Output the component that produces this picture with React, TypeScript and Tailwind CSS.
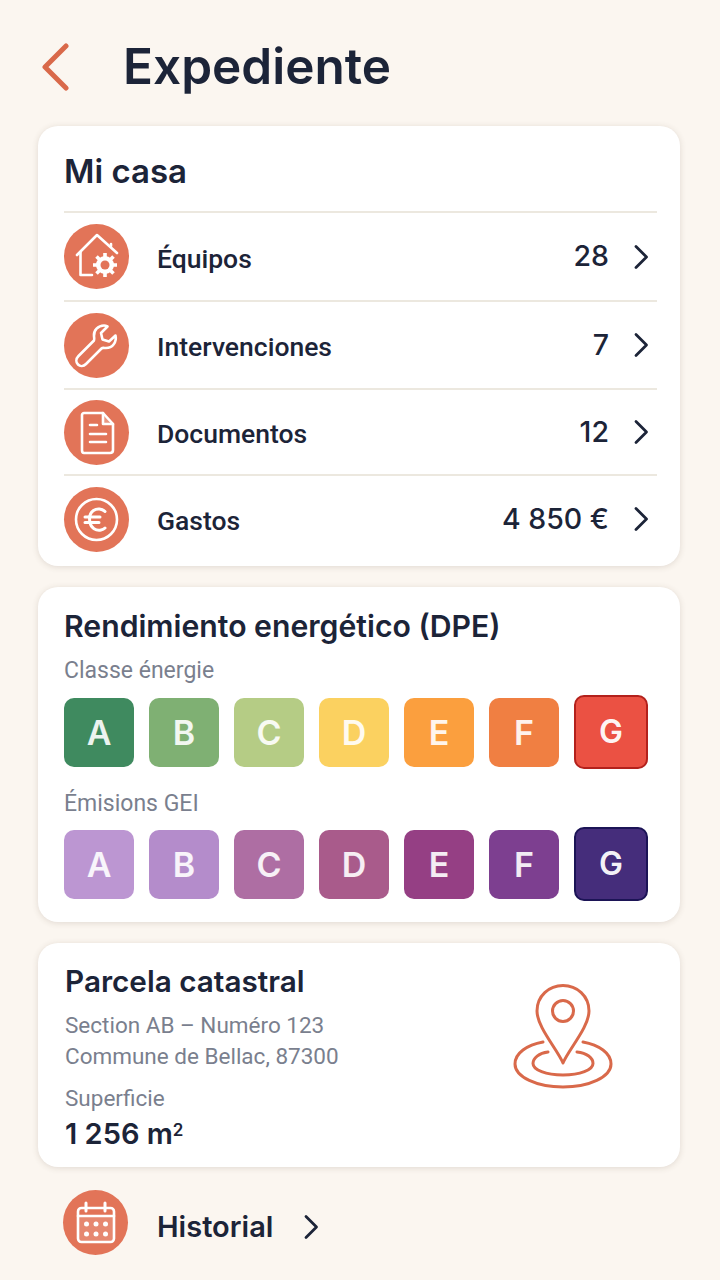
import type { ReactNode } from 'react';

const inter = { fontFamily: 'Inter, sans-serif' };
const roboto = { fontFamily: 'Roboto, sans-serif' };

const iconProps = {
  viewBox: '0 0 65 65',
  className: 'h-[65px] w-[65px]',
  fill: 'none',
  stroke: 'white',
  strokeWidth: 2.6,
  strokeLinecap: 'round' as const,
  strokeLinejoin: 'round' as const,
};

const HouseGear = () => (
  <svg {...iconProps}>
    <path d="M13 31 L33 11 L53 29" />
    <path d="M16.5 28 V51 H28" />
    <path d="M47 22 V20" />
    <g stroke="white" strokeWidth="3.6" strokeLinecap="butt">
      <path d="M41 29 V53 M29 41 H53 M32.5 32.5 L49.5 49.5 M32.5 49.5 L49.5 32.5" />
    </g>
    <circle cx="41" cy="41" r="9" fill="white" stroke="none" />
    <circle cx="41" cy="41" r="4.5" fill="#e27458" stroke="none" />
  </svg>
);

const Wrench = () => (
  <svg {...iconProps}>
    <path d="M40 12.5 C34 12.5 29.5 17.5 30 23 C30.2 25 30.5 26.5 30 27.5 L14.5 43 C11.5 46 12 49.5 14 51.5 C16 53.5 19.5 53.5 22 51 L37.5 35.5 C38.5 34.5 40 35 42 35 C48.5 35 53 29 51.5 22.5 L45 28.5 L38.5 26.5 L37 20 L43.5 13.5 C42.5 13 41.2 12.5 40 12.5 Z" />
  </svg>
);

const DocIcon = () => (
  <svg {...iconProps}>
    <path d="M20 13 H39 L49 24 V50 C49 52 48 53 46 53 H20 C19 53 18 52 18 50 V15 C18 14 19 13 20 13 Z" />
    <path d="M39 13 V24 H49" fill="white" fillOpacity="0.25" />
    <path d="M26 25 H33 M26 34 H42 M26 42 H42" />
  </svg>
);

const EuroIcon = () => (
  <svg {...iconProps}>
    <circle cx="32.5" cy="32.5" r="20.5" />
    <path d="M41 24.5 C38 21.5 33 21 29.5 23.5 C26 26 25 31 26 35.5 C27 41 32 44 37 43 C38.5 42.7 40 42 41 41" strokeWidth="3" />
    <path d="M21 30 H36 M21 35.5 H35" strokeWidth="3" />
  </svg>
);

const CalendarIcon = () => (
  <svg {...iconProps}>
    <rect x="15" y="18" width="36" height="34" rx="3.5" />
    <path d="M16 26 H50 V48 A3 3 0 0 1 47 51 H19 A3 3 0 0 1 16 48 Z" fill="white" fillOpacity="0.15" stroke="none" />
    <path d="M15 26 H51" />
    <path d="M23 13 V21 M42 13 V21" strokeWidth="3" />
    <g fill="white" stroke="none">
      <circle cx="23.5" cy="34" r="2.5" />
      <circle cx="33" cy="34" r="2.5" />
      <circle cx="42.5" cy="34" r="2.5" />
      <circle cx="23.5" cy="44" r="2.5" />
      <circle cx="33" cy="44" r="2.5" />
      <circle cx="42.5" cy="44" r="2.5" />
    </g>
  </svg>
);

const PinIcon = () => (
  <svg viewBox="0 0 100 105" className="h-[105px] w-[100px]" fill="none" stroke="#d9694a" strokeWidth="3" strokeLinecap="round" strokeLinejoin="round">
    <path d="M50 79 C44 65 24 43 24 27 C24 12 36 1.5 50 1.5 C64 1.5 76 12 76 27 C76 43 56 65 50 79 Z" />
    <circle cx="50" cy="27" r="10.5" />
    <path d="M30 58 C14 61 2 69 2 80 C2 93 24 103 50 103 C76 103 98 93 98 80 C98 69 86 61 70 58" />
    <path d="M35 68 C26 69 20 74 20 79.5 C20 86 33 91 50 91 C67 91 80 86 80 79.5 C80 74 74 69 64 68" />
  </svg>
);

function Chevron({ className }: { className: string }) {
  return (
    <svg viewBox="0 0 16 26" className={className} fill="none" stroke="#1c2438" strokeWidth="2.8" strokeLinecap="round" strokeLinejoin="round">
      <path d="M3 2.5 L13.5 13 L3 23.5" />
    </svg>
  );
}

function CircleIcon({ children }: { children: ReactNode }) {
  return <div className="flex h-[65px] w-[65px] shrink-0 items-center justify-center rounded-full bg-[#e27458]">{children}</div>;
}

const rows = [
  { label: 'Équipos', value: '28', icon: <HouseGear />, h: 'h-[89px]' },
  { label: 'Intervenciones', value: '7', icon: <Wrench />, h: 'h-[88px]' },
  { label: 'Documentos', value: '12', icon: <DocIcon />, h: 'h-[86px]' },
  { label: 'Gastos', value: '4 850 €', icon: <EuroIcon />, h: 'h-[88px]' },
];

const energy = ['bg-[#3f8a5f]', 'bg-[#7fb073]', 'bg-[#b5cc85]', 'bg-[#fbd160]', 'bg-[#fb9f3e]', 'bg-[#f07f42]'];
const ges = ['bg-[#bc96d2]', 'bg-[#b48ccb]', 'bg-[#ae6ea3]', 'bg-[#a95b8b]', 'bg-[#953f84]', 'bg-[#7d3f90]'];
const letters = ['A', 'B', 'C', 'D', 'E', 'F'];

function Scale({ colors, last, top }: { colors: string[]; last: string; top: string }) {
  return (
    <div className={`flex items-center gap-[15px] ${top}`}>
      {colors.map((c, i) => (
        <div key={letters[i]} className={`flex h-[69px] w-[70px] items-center justify-center rounded-[10px] text-[34px] font-semibold text-white/90 ${c}`}>
          {letters[i]}
        </div>
      ))}
      <div className={`flex h-[74px] w-[74px] items-center justify-center rounded-[10px] border-2 text-[32px] font-semibold text-white/95 ${last}`}>G</div>
    </div>
  );
}

export default function App() {
  return (
    <div style={inter} className="h-[1280px] w-[720px] overflow-hidden bg-[#fbf6f0] text-[#1c2438]">
      <header className="flex h-[126px] items-center pt-[7px] pl-[40px]">
        <svg viewBox="0 0 30 48" className="h-[48px] w-[30px]" fill="none" stroke="#d9694a" strokeWidth="5" strokeLinecap="round" strokeLinejoin="round">
          <path d="M26 3 L5 24 L26 45" />
        </svg>
        <h1 className="ml-[53px] text-[49.5px] font-semibold leading-none">Expediente</h1>
      </header>

      <section className="ml-[38px] h-[440px] w-[642px] rounded-[20px] bg-white pl-[26px] pr-[23px] shadow-[0_1px_6px_rgba(90,70,50,0.16)]">
        <h2 className="flex h-[85px] items-center pt-[6px] text-[33px] font-semibold">Mi casa</h2>
        {rows.map((r) => (
          <div key={r.label} className={`flex items-center border-t-2 border-[#ece8df] ${r.h}`}>
            <CircleIcon>{r.icon}</CircleIcon>
            <span style={roboto} className="ml-[28px] pt-[4px] text-[26.5px] font-medium">{r.label}</span>
            <span className="ml-auto text-[28.5px] font-medium">{r.value}</span>
            <Chevron className="ml-[24px] mr-[8px] h-[26px] w-[16px]" />
          </div>
        ))}
      </section>

      <section className="ml-[38px] mt-[21px] h-[335px] w-[642px] rounded-[20px] bg-white px-[26px] pt-[17px] shadow-[0_1px_6px_rgba(90,70,50,0.16)]">
        <h2 className="text-[30.2px] font-semibold leading-[44px]">Rendimiento energético (DPE)</h2>
        <p style={roboto} className="mt-[8px] text-[23px] leading-[30px] text-[#7a7f8e]">Classe énergie</p>
        <Scale colors={energy} last="border-[#b3211c] bg-[#eb5143]" top="mt-[9px]" />
        <p style={roboto} className="mt-[20px] text-[23px] leading-[30px] text-[#7a7f8e]">Émisions GEI</p>
        <Scale colors={ges} last="border-[#1c1456] bg-[#452d7b]" top="mt-[8px]" />
      </section>

      <section className="ml-[38px] mt-[21px] flex h-[224px] w-[642px] justify-between rounded-[20px] bg-white pl-[27px] pr-[67px] pt-[16px] shadow-[0_1px_6px_rgba(90,70,50,0.16)]">
        <div>
          <h2 className="text-[29.7px] font-semibold leading-[44px]">Parcela catastral</h2>
          <p style={roboto} className="mt-[7px] text-[22.5px] leading-[31px] text-[#7a7f8e]">Section AB – Numéro 123</p>
          <p style={roboto} className="text-[22.5px] leading-[31px] text-[#7a7f8e]">Commune de Bellac, 87300</p>
          <p style={roboto} className="mt-[11px] text-[22.5px] leading-[31px] text-[#7a7f8e]">Superficie</p>
          <p className="text-[29px] font-semibold leading-[40px]">
            1 256 m<sup className="text-[17px]">2</sup>
          </p>
        </div>
        <div className="mt-[25px]">
          <PinIcon />
        </div>
      </section>

      <div className="mt-[23px] flex items-center pl-[63px]">
        <CircleIcon>
          <CalendarIcon />
        </CircleIcon>
        <span className="ml-[29px] pt-[8px] text-[29px] font-semibold">Historial</span>
        <Chevron className="ml-[30px] mt-[8px] h-[26px] w-[16px]" />
      </div>
    </div>
  );
}
